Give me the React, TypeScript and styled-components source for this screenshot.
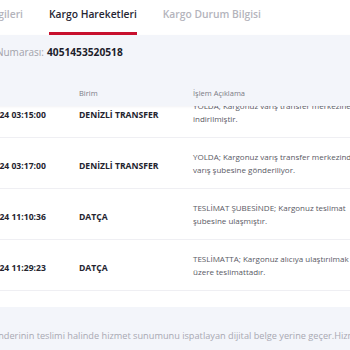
import styled, { createGlobalStyle } from "styled-components";

const GlobalStyle = createGlobalStyle`
  html, body {
    margin: 0;
    padding: 0;
    background: #ffffff;
  }
  body {
    font-family: "Open Sans", "Noto Sans", sans-serif;
    -webkit-font-smoothing: antialiased;
  }
`;

/** Cargo movement rows shown in the table */
const MOVEMENTS = [
  {
    date: "27.05.2024 03:15:00",
    unit: "DENİZLİ TRANSFER",
    lines: ["YOLDA; Kargonuz varış transfer merkezine", "indirilmiştir."],
  },
  {
    date: "27.05.2024 03:17:00",
    unit: "DENİZLİ TRANSFER",
    lines: ["YOLDA; Kargonuz varış transfer merkezinden", "varış şubesine gönderiliyor."],
  },
  {
    date: "27.05.2024 11:10:36",
    unit: "DATÇA",
    lines: ["TESLİMAT ŞUBESİNDE; Kargonuz teslimat", "şubesine ulaşmıştır."],
  },
  {
    date: "27.05.2024 11:29:23",
    unit: "DATÇA",
    lines: ["TESLİMATTA; Kargonuz alıcıya ulaştırılmak", "üzere teslimattadır."],
  },
];

const TABS = ["Kargo Bilgileri", "Kargo Hareketleri", "Kargo Durum Bilgisi"];

const App = () => (
  <Viewport>
    <GlobalStyle />
    <Page>
      <TabBar>
        {TABS.map((tab, i) => (
          <Tab key={tab} $active={i === 1} $first={i === 0}>
            {tab}
          </Tab>
        ))}
      </TabBar>

      <InfoPanel>
        <TrackingLine>
          <TrackingLabel>Kargo Takip Numarası:</TrackingLabel>
          <TrackingNumber>4051453520518</TrackingNumber>
        </TrackingLine>
        <HeadRow>
          <DateCell>
            <HeadText>Tarih</HeadText>
          </DateCell>
          <UnitCell>
            <HeadText>Birim</HeadText>
          </UnitCell>
          <DescCell>
            <HeadText>İşlem Açıklama</HeadText>
          </DescCell>
        </HeadRow>
      </InfoPanel>

      <Body>
        {MOVEMENTS.map((m) => (
          <Row key={m.date}>
            <DateCell>
              <StrongText>{m.date}</StrongText>
            </DateCell>
            <UnitCell>
              <StrongText>{m.unit}</StrongText>
            </UnitCell>
            <DescCell>
              <DescText>
                {m.lines[0]}
                <br />
                {m.lines[1]}
              </DescText>
            </DescCell>
          </Row>
        ))}
      </Body>

      <Footer>
        <FooterText>
          Gönderinin teslimi halinde hizmet sunumunu ispatlayan dijital belge
          yerine geçer.Hizmet alımına ilişkin bilgiler
        </FooterText>
      </Footer>
    </Page>
  </Viewport>
);

const Viewport = styled.div`
  width: 350px;
  height: 350px;
  overflow: hidden;
`;

const Page = styled.div`
  width: 700px;
  margin-left: -120px;
`;

const TabBar = styled.div`
  display: flex;
  align-items: stretch;
  gap: 26px;
  height: 35px;
  background: #ffffff;
`;

const Tab = styled.div<{ $active?: boolean; $first?: boolean }>`
  box-sizing: border-box;
  padding-top: 6px;
  width: ${({ $first }) => ($first ? "143px" : "auto")};
  text-align: ${({ $first }) => ($first ? "right" : "left")};
  font-size: 10.3px;
  font-weight: 600;
  line-height: 16px;
  color: ${({ $active }) => ($active ? "#262633" : "#b4b4bc")};
  border-bottom: 3px solid ${({ $active }) => ($active ? "#c8102e" : "transparent")};
  white-space: nowrap;
`;

const InfoPanel = styled.div`
  background: #f3f5fa;
  height: 71px;
  display: flex;
  flex-direction: column;
  position: relative;
  z-index: 1;
  box-shadow: 0 1px 2px rgba(30, 40, 80, 0.06);
`;

const TrackingLine = styled.div`
  display: flex;
  align-items: baseline;
  gap: 3px;
  padding-top: 10px;
  height: 18px;
`;

const TrackingLabel = styled.span`
  width: 164px;
  text-align: right;
  font-size: 10px;
  color: #a2a2aa;
  white-space: nowrap;
`;

const TrackingNumber = styled.span`
  font-size: 10.2px;
  font-weight: 700;
  color: #1d1d2b;
`;

const HeadRow = styled.div`
  display: flex;
  align-items: center;
  margin-top: auto;
  height: 33px;
`;

const DateCell = styled.div`
  box-sizing: border-box;
  width: 199px;
  padding-left: 85px;
  flex-shrink: 0;
`;

const UnitCell = styled.div`
  width: 114px;
  flex-shrink: 0;
`;

const DescCell = styled.div`
  flex: 1;
`;

const HeadText = styled.span`
  font-size: 7.5px;
  color: #7b7b85;
  white-space: nowrap;
`;

const Body = styled.div`
  overflow: hidden;
`;

const Row = styled.div`
  display: flex;
  align-items: center;
  height: 50px;
  border-bottom: 1px solid #efeff3;
  &:first-child {
    margin-top: -19px;
  }
`;

const StrongText = styled.span`
  font-size: 8.6px;
  font-weight: 700;
  color: #24242f;
  white-space: nowrap;
`;

const DescText = styled.div`
  font-size: 8px;
  line-height: 13px;
  color: #595964;
  white-space: nowrap;
`;

const Footer = styled.div`
  margin-top: 16px;
  background: #f3f5fa;
  height: 60px;
  box-sizing: border-box;
  padding-top: 22px;
  padding-left: 106px;
`;

const FooterText = styled.div`
  font-size: 9.2px;
  color: #a8a8b2;
  white-space: nowrap;
`;

export default App;
